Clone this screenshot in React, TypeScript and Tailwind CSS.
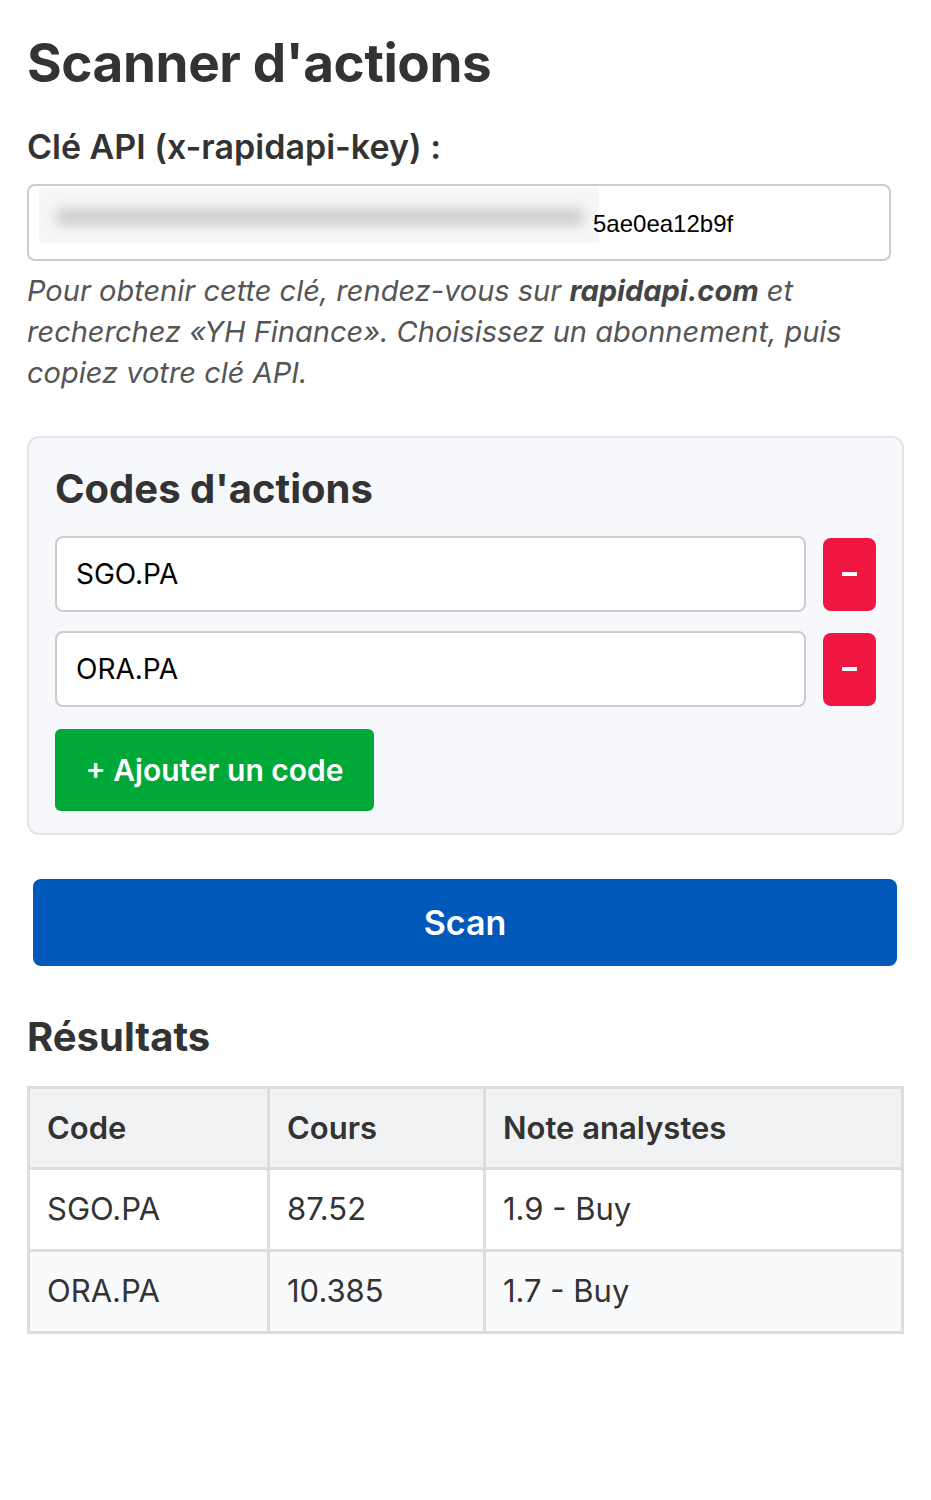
import React from "react";

const codes = ["SGO.PA", "ORA.PA"];

const results = [
  { code: "SGO.PA", cours: "87.52", note: "1.9 - Buy" },
  { code: "ORA.PA", cours: "10.385", note: "1.7 - Buy" },
];

const App: React.FC = () => {
  return (
    <div className="min-h-[1500px] bg-white px-[27px] pt-[29px] text-[#333] font-['Inter','Noto_Sans',sans-serif]">
      {/* Title */}
      <h1 className="text-[53px] font-bold leading-[68px] tracking-[-0.4px] text-[#333]">
        Scanner d'actions
      </h1>

      {/* API key */}
      <label className="block mt-[28px] text-[34px] font-semibold leading-[44px] text-[#333]">
        Clé API (x-rapidapi-key) :
      </label>
      <div className="relative mt-[15px] w-[864px] h-[77px] rounded-[8px] border-2 border-[#ccc] bg-white overflow-hidden">
        <div className="absolute left-[10px] top-[2px] h-[55px] w-[560px] bg-[#f6f6f6]">
          <div className="mt-[20px] ml-[16px] h-[18px] w-[530px] rounded-full bg-[#cfcfcf] blur-[6px]"></div>
        </div>
        <span className="absolute left-[564px] top-[24px] text-[24px] leading-[28px] text-black font-['Liberation_Sans',sans-serif]">
          5ae0ea12b9f
        </span>
      </div>
      <p className="mt-[9px] text-[29px] italic leading-[41px] text-[#555]">
        Pour obtenir cette clé, rendez-vous sur <b className="font-bold text-[#444]">rapidapi.com</b> et
        recherchez «YH Finance». Choisissez un abonnement, puis copiez votre clé API.
      </p>

      {/* Codes card */}
      <div className="mt-[43px] rounded-[12px] border-2 border-[#e3e4e8] bg-[#f7f8fc] px-[26px] pt-[24px] pb-[22px]">
        <h2 className="text-[40px] font-bold leading-[54px] text-[#333]">
          Codes d'actions
        </h2>
        <div className="mt-[20px] flex flex-col gap-[19px]">
          {codes.map((c) => (
            <div key={c} className="flex items-center gap-[17px]">
              <div className="flex h-[76px] flex-1 items-center rounded-[8px] border-2 border-[#ccc] bg-white px-[19px] text-[28px] text-black">
                {c}
              </div>
              <button className="flex h-[73px] w-[53px] items-center justify-center rounded-[8px] bg-[#f0163f]">
                <span className="block h-[4px] w-[15px] bg-white"></span>
              </button>
            </div>
          ))}
        </div>
        <button className="mt-[22px] h-[82px] w-[319px] rounded-[6px] bg-[#00a838] text-[30px] font-semibold text-white">
          + Ajouter un code
        </button>
      </div>

      {/* Scan */}
      <button className="mt-[44px] ml-[6px] block h-[87px] w-[864px] rounded-[8px] bg-[#0058b9] text-[34px] font-semibold text-white">
        Scan
      </button>

      {/* Results */}
      <h2 className="mt-[44px] text-[40px] font-bold leading-[54px] text-[#333]">
        Résultats
      </h2>
      <table className="mt-[22px] w-[877px] border-collapse text-[31px] text-[#333]">
        <thead>
          <tr className="bg-[#f0f2f4]">
            <th className="h-[81px] w-[240px] border-[3px] border-[#ddd] px-[17px] text-left font-semibold">Code</th>
            <th className="h-[81px] w-[216px] border-[3px] border-[#ddd] px-[17px] text-left font-semibold">Cours</th>
            <th className="h-[81px] border-[3px] border-[#ddd] px-[17px] text-left font-semibold">Note analystes</th>
          </tr>
        </thead>
        <tbody>
          {results.map((r, i) => (
            <tr key={r.code} className={i % 2 === 1 ? "bg-[#f8fafc]" : "bg-white"}>
              <td className="h-[82px] border-[3px] border-[#ddd] px-[17px]">{r.code}</td>
              <td className="h-[82px] border-[3px] border-[#ddd] px-[17px]">{r.cours}</td>
              <td className="h-[82px] border-[3px] border-[#ddd] px-[17px]">{r.note}</td>
            </tr>
          ))}
        </tbody>
      </table>
    </div>
  );
};

export default App;
